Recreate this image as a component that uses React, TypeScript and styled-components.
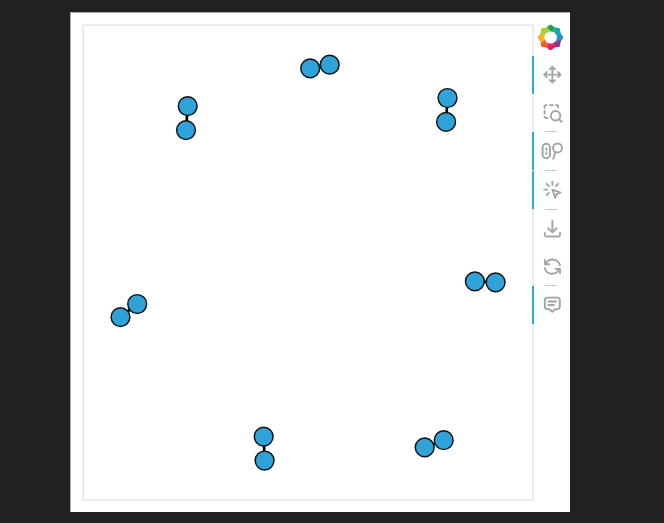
import React from "react";
import styled, { createGlobalStyle } from "styled-components";

const GlobalStyle = createGlobalStyle`
  html, body { margin: 0; background: #212121; overflow: hidden; }
  body { font-family: "Liberation Sans", sans-serif; }
`;

const Page = styled.main`
  box-sizing: border-box;
  width: 664px;
  height: 523px;
  padding: 12px 0 0 70px;
  background: #212121;
`;

const Figure = styled.section`
  box-sizing: border-box;
  display: flex;
  width: 500px;
  height: 500px;
  border-top: 1px solid #a8a8a8;
  border-left: 1px solid #b0b0b0;
  background: #fff;
`;

const Plot = styled.svg`
  display: block;
  flex: none;
  width: 461px;
  height: 499px;
  overflow: visible;
`;

const Toolbar = styled.aside`
  display: flex;
  flex-direction: column;
  width: 38px;
  padding-top: 5px;
`;

const Tool = styled.button<{ $active?: boolean; $height?: number }>`
  box-sizing: border-box;
  display: flex;
  flex: none;
  align-items: center;
  justify-content: center;
  width: 38px;
  height: ${({ $height }) => $height ?? 38}px;
  margin: 0;
  padding: 0;
  border: 0;
  border-left: 2px solid ${({ $active }) => ($active ? "#26aae1" : "transparent")};
  background: transparent;
`;

const Divider = styled.div`
  flex: none;
  width: 12px;
  height: 1px;
  margin-left: 13px;
  background: #c5c9ca;
`;

const Glyph = styled.svg`
  display: block;
  width: 24px;
  height: 24px;
  overflow: visible;
  fill: none;
  stroke: #a1a6a9;
  stroke-width: 1.95;
  stroke-linecap: round;
  stroke-linejoin: round;
`;

const LogoLink = styled.div`
  display: flex;
  flex: none;
  align-items: center;
  width: 38px;
  height: 38px;
  padding-left: 5px;
  box-sizing: border-box;
`;

const pairs = [
  [187.7, 106.1, 186, 130.1],
  [310.2, 68.4, 329.7, 64.7],
  [447.5, 98, 446.1, 121.9],
  [474.9, 281.4, 495.6, 282.4],
  [137.2, 304, 120.5, 317.1],
  [263.7, 436.6, 264.6, 460.5],
  [424.7, 447.4, 443.7, 440.2],
];

const petals = ["#22a04b", "#16a6a4", "#2591d0", "#8b368f", "#ed1969", "#f15a29", "#fbb01f", "#a4d12f"];

function Logo() {
  return (
    <svg width="26" height="26" viewBox="-13.6 -13.5 26 26" aria-label="Bokeh">
      {petals.map((color, i) => (
        <g key={color} transform={`rotate(${i * 45})`}>
          <path d="M-.7-12.7H.7L5-9.2 4.4-5.3-2.7-6.6-5.4-9Z" fill={color} />
          <path d="M-5.4-9 4.4-5.3-2.7-6.6Z" fill="#fff" fillOpacity=".15" />
        </g>
      ))}
    </svg>
  );
}

export default function App() {
  return (
    <>
      <GlobalStyle />
      <Page>
        <Figure>
          <Plot viewBox="71 13 461 499">
            <rect x="83.2" y="25.2" width="449.9" height="474.7" fill="none" stroke="#e5e5e5" strokeWidth="1.4" />
            {pairs.map(([x1, y1, x2, y2]) => (
              <g key={x1} stroke="#111">
                <line x1={x1} y1={y1} x2={x2} y2={y2} strokeWidth="2.7" stroke="#000" />
                <circle cx={x1} cy={y1} r="9.4" fill="#30a2da" strokeWidth="1.45" />
                <circle cx={x2} cy={y2} r="9.4" fill="#30a2da" strokeWidth="1.45" />
              </g>
            ))}
          </Plot>
          <Toolbar>
            <LogoLink><Logo /></LogoLink>
            <Tool $active aria-label="Pan">
              <Glyph viewBox="0 0 24 24">
                <path d="M12.4 3.8v15.8M4.2 11.6h16.4M9.9 6.2l2.5-2.5 2.5 2.5M9.9 17.1l2.5 2.5 2.5-2.5M6.7 9.1l-2.5 2.5 2.5 2.5M18.1 9.1l2.5 2.5-2.5 2.5" />
              </Glyph>
            </Tool>
            <Tool $height={37} aria-label="Box zoom">
              <Glyph viewBox="0 0 24 24">
                <path d="M4.6 7V5.2q0-1.1 1.1-1.1h1M10 4.1h3M16 4.1h1q1.1 0 1.1 1.1v1M4.6 10v2.6M4.6 15.6q0 1.4 1.1 1.4h1.9" />
                <circle cx="15.6" cy="14.7" r="4.7" />
                <path d="m19 18.1 2.6 2.6" />
              </Glyph>
            </Tool>
            <Divider />
            <Tool $active aria-label="Wheel zoom">
              <Glyph viewBox="0 -0.6 24 24">
                <rect x="2.6" y="4.2" width="7.4" height="14.4" rx="3.7" />
                <path d="M6.3 8.2v6.6M5.1 9.7l1.2-1.4 1.2 1.4M5.1 13.3l1.2 1.4 1.2-1.4" strokeWidth="1" />
                <circle cx="17.5" cy="8.3" r="4.5" />
                <path d="m15.2 12.8-1.9 6.4" />
              </Glyph>
            </Tool>
            <Divider />
            <Tool $active aria-label="Tap">
              <Glyph viewBox="0 0 24 24">
                <path d="M4.2 11.6h3M12.4 3.8v3M6.7 5.9l2.1 2.1M18.1 5.9l-2.1 2.1M8.8 14.9l-2.1 2.1M12.4 11.6l8 3-3.8 1.4-1.4 3.8Z" />
              </Glyph>
            </Tool>
            <Divider />
            <Tool aria-label="Save">
              <Glyph viewBox="0 0 24 24">
                <path d="M4.8 15.9v2q0 1.5 1.5 1.5h12.2q1.5 0 1.5-1.5v-2M12.4 3.8v11.4M8.2 11.2l4.2 4.2 4.2-4.2" />
              </Glyph>
            </Tool>
            <Tool $height={37} aria-label="Reset">
              <Glyph viewBox="0 0 24 24">
                <path d="M4.9 5v4.2h4.2M5.3 8.8C9.2 2.6 18.1 3.3 19.9 10.3M20 18.2V14h-4.2M19.6 14.3C15.7 20.7 6.5 20 4.9 13.1" />
              </Glyph>
            </Tool>
            <Divider />
            <Tool $active aria-label="Hover">
              <Glyph viewBox="0 0 24 24">
                <path d="M7.4 4.6h9.8q2.6 0 2.6 2.6v6.4q0 2.6-2.6 2.6h-2.1l-2.8 2.6-2.8-2.6H7.4q-2.6 0-2.6-2.6V7.2q0-2.6 2.6-2.6ZM8.4 8.5h7.8M8.4 11.9h5.7" />
              </Glyph>
            </Tool>
          </Toolbar>
        </Figure>
      </Page>
    </>
  );
}
